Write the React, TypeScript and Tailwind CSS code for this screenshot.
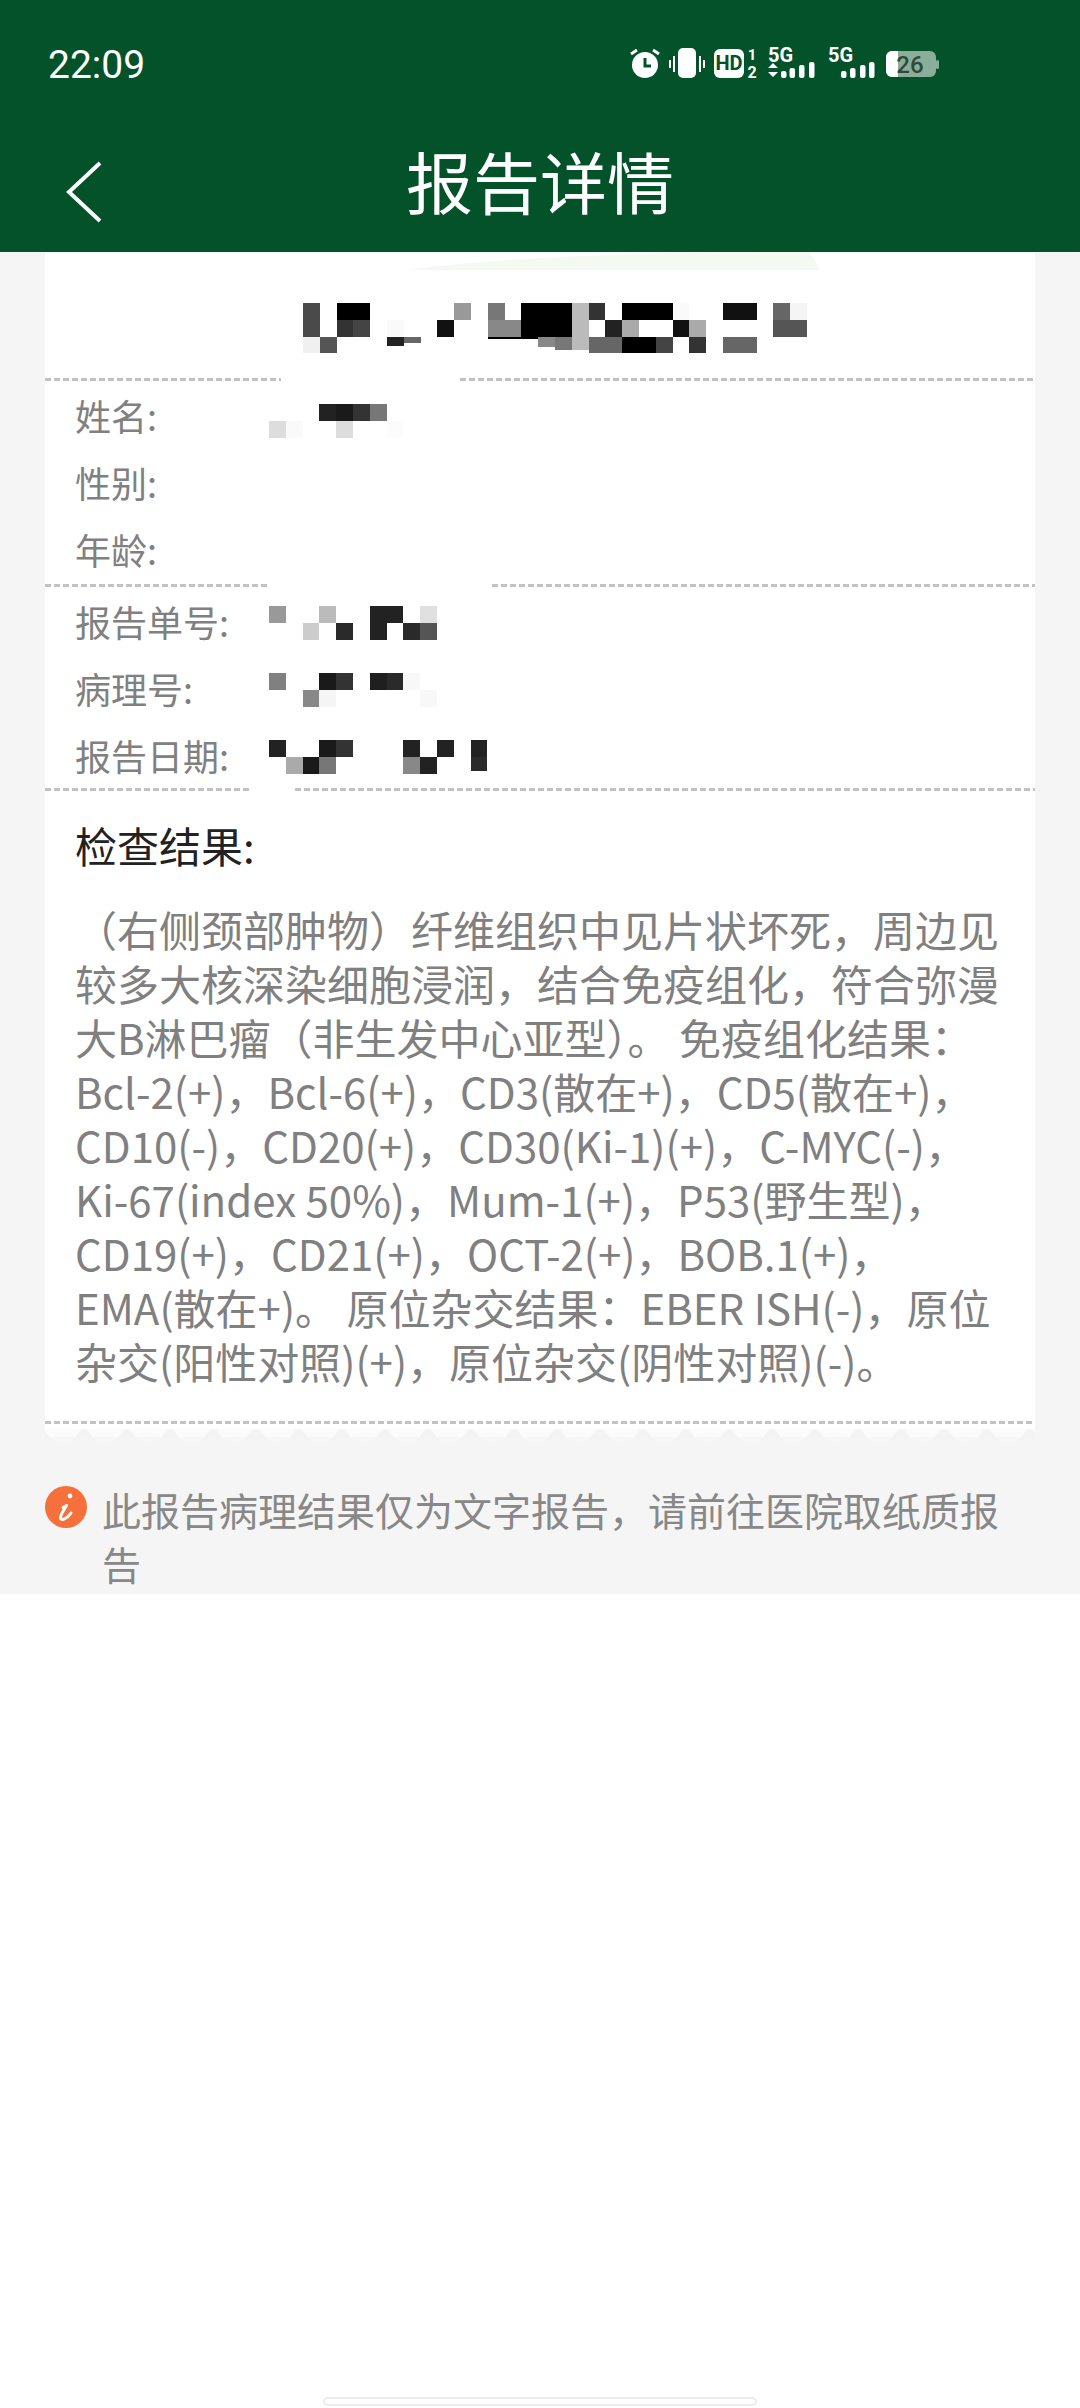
type Cell = [number, number, string, number?];

const titleCells: Cell[] = [
    [0, 0, '#4a4a4a'], [2, 0, '#000'], [3, 0, '#000'], [9, 0, '#999'], [11, 0, '#777'], [13, 0, '#000'], [14, 0, '#000'], [15, 0, '#000'],
    [16, 0, '#bbb'], [17, 0, '#333'], [19, 0, '#000'], [20, 0, '#000'], [21, 0, '#000'], [22, 0, '#fafafa'], [25, 0, '#111'], [26, 0, '#111'], [28, 0, '#666'], [29, 0, '#f5f5f5'],
    [0, 1, '#4a4a4a'], [2, 1, '#333'], [3, 1, '#444'], [5, 1, '#fafafa'], [8, 1, '#111'], [11, 1, '#888'], [12, 1, '#888'], [13, 1, '#000'], [14, 1, '#000'], [15, 1, '#000'],
    [16, 1, '#bbb'], [18, 1, '#222'], [19, 1, '#aaa'], [22, 1, '#111'], [23, 1, '#aaa'], [28, 1, '#555'], [29, 1, '#555'],
    [0, 2, '#f0f0f0'], [1, 2, '#555'], [5, 2, '#222', 0.55], [6, 2, '#666', 0.4], [11, 2, '#000', 0.15], [12, 2, '#000', 0.15], [13, 2, '#000', 0.15], [14, 2, '#888', 0.6],
    [15, 2, '#777', 0.8], [16, 2, '#bbb', 0.8], [17, 2, '#666'], [18, 2, '#666'], [19, 2, '#000'], [20, 2, '#000'], [21, 2, '#444'], [23, 2, '#333'], [25, 2, '#666'], [26, 2, '#666'],
];

const nameCells: Cell[] = [
    [3, 0, '#222'], [4, 0, '#1a1a1a'], [5, 0, '#333'], [6, 0, '#777'],
    [0, 1, '#ddd'], [1, 1, '#fafafa'], [4, 1, '#ddd'], [7, 1, '#fcfcfc'],
];

const reportCells: Cell[] = [
    [0, 0, '#999'], [3, 0, '#bbb'], [6, 0, '#222'], [7, 0, '#222'], [9, 0, '#e0e0e0'],
    [2, 1, '#ccc'], [4, 1, '#2a2a2a'], [6, 1, '#222'], [8, 1, '#2a2a2a'], [9, 1, '#555'],
];

const pathologyCells: Cell[] = [
    [0, 0, '#808080'], [3, 0, '#1a1a1a'], [4, 0, '#333'], [6, 0, '#1f1f1f'], [7, 0, '#2a2a2a'], [8, 0, '#f8f8f8'],
    [2, 1, '#888'], [3, 1, '#f5f5f5'], [9, 1, '#f8f8f8'],
];

const dateCells: Cell[] = [
    [0, 0, '#222'], [3, 0, '#1a1a1a'], [4, 0, '#333'], [8, 0, '#222'], [10, 0, '#222'], [12, 0, '#222'],
    [1, 1, '#aaa'], [2, 1, '#1a1a1a'], [3, 1, '#777'], [8, 1, '#888'], [9, 1, '#222'], [12, 1, '#2a2a2a', 0.85],
];

const resultLines = [
    '（右侧颈部肿物）纤维组织中见片状坏死，周边见',
    '较多大核深染细胞浸润，结合免疫组化，符合弥漫',
    '大B淋巴瘤（非生发中心亚型）。 免疫组化结果：',
    'Bcl-2(+)，Bcl-6(+)，CD3(散在+)，CD5(散在+)，',
    'CD10(-)，CD20(+)，CD30(Ki-1)(+)，C-MYC(-)，',
    'Ki-67(index 50%)，Mum-1(+)，P53(野生型)，',
    'CD19(+)，CD21(+)，OCT-2(+)，BOB.1(+)，',
    'EMA(散在+)。 原位杂交结果：EBER ISH(-)，原位',
    '杂交(阳性对照)(+)，原位杂交(阴性对照)(-)。',
];

function Mosaic({ cells, cols, rows, className }: { cells: Cell[]; cols: number; rows: number; className?: string }) {
    const size = 16.8;
    return (
        <svg className={className} width={cols * size} height={rows * size} viewBox={`0 0 ${cols * size} ${rows * size}`} shapeRendering="crispEdges">
            {cells.map(([col, row, color, part]) => (
                <rect key={`${col}-${row}`} x={col * size} y={row * size} width={size} height={size * (part ?? 1)} fill={color} />
            ))}
        </svg>
    );
}

const dashes = 'bg-[repeating-linear-gradient(90deg,#c2c2c2_0,#c2c2c2_6px,transparent_6px,transparent_9px)]';

// dashed divider; the screenshot has a bit of it wiped out next to the redactions
function Divider({ gapStart, gapWidth }: { gapStart?: number; gapWidth?: number }) {
    if (gapStart === undefined) {
        return <div className={`h-[3px] ${dashes}`} />;
    }
    return (
        <div className="flex h-[3px]">
            <div className={dashes} style={{ width: gapStart }} />
            <div style={{ width: gapWidth }} />
            <div className={`flex-1 ${dashes}`} />
        </div>
    );
}

function InfoRow({ label, children }: { label: string; children?: React.ReactNode }) {
    return (
        <div className="flex h-[60px] items-start pl-[30px]">
            <div className="flex h-[54px] w-[194px] items-center text-[36px] text-[#808080]">{label}</div>
            {children}
        </div>
    );
}

function StatusIcons() {
    const bars = (x: number[]) =>
        x.map((bx, i) => <rect key={bx} x={bx} y={71 - i * 3} width={5.5} height={7 + i * 3} rx={2} fill="#fff" />);
    return (
        <svg width={320} height={50} viewBox="625 40 320 50" className="mr-[135px] ml-auto">
            <circle cx={645} cy={65} r={13} fill="#fff" />
            <path d="M645 58v8h6" fill="none" stroke="#03522a" strokeWidth={3} />
            <path d="M631 54l6-4M653 50l6 4" stroke="#fff" strokeWidth={3} />
            <rect x={678} y={48} width={18} height={30} rx={5} fill="#fff" />
            <path d="M670 60v8M674 56v16M700 56v16M704 60v8" stroke="#fff" strokeWidth={2} />
            <rect x={714} y={49} width={30} height={29} rx={6} fill="#fff" />
            <text x={729} y={70} textAnchor="middle" fontSize={20} fontWeight={700} fill="#03522a" fontFamily="Roboto">HD</text>
            <text x={752} y={60} textAnchor="middle" fontSize={15} fontWeight={700} fill="#fff" fontFamily="Roboto">1</text>
            <text x={752} y={78} textAnchor="middle" fontSize={16} fontWeight={700} fill="#fff" fontFamily="Roboto">2</text>
            <text x={768} y={62} fontSize={20} fontWeight={700} fill="#fff" fontFamily="Roboto">5G</text>
            <path d="M773 63l5 5h-10zM768 72h10l-5 5z" fill="#fff" />
            {bars([781, 789.5, 799, 809])}
            <text x={828} y={62} fontSize={20} fontWeight={700} fill="#fff" fontFamily="Roboto">5G</text>
            {bars([841, 850, 860, 869])}
            <rect x={886} y={51} width={50} height={26} rx={6} fill="#8aae9a" />
            <path d="M892 51h6v26h-6a6 6 0 0 1-6-6V57a6 6 0 0 1 6-6z" fill="#fff" />
            <rect x={936} y={60} width={3} height={9} rx={1.500} fill="#8aae9a" />
            <text x={910} y={73} textAnchor="middle" fontSize={24} fontWeight={500} fill="#2f4a3b" fontFamily="Roboto">26</text>
        </svg>
    );
}

export default function App() {
    return (
        <div className="flex min-h-[2408px] w-[1080px] flex-col bg-white font-['Noto_Sans_CJK_SC',sans-serif]">
            <header className="h-[252px] bg-[#03522a] pt-[40px] text-white">
                <div className="flex h-[50px] items-center pl-[48px]">
                    <span className="font-['Roboto',sans-serif] text-[39px] leading-none font-normal">22:09</span>
                    <StatusIcons />
                </div>
                <div className="mt-[42px] grid h-[100px] grid-cols-[1fr_auto_1fr] items-center">
                    <svg className="mt-[20px] ml-[66px]" width={36} height={62} viewBox="0 0 36 62" fill="none">
                        <path d="M34 2L3 31l31 29" stroke="#fff" strokeWidth={4} />
                    </svg>
                    <h1 className="mb-[6px] text-[67px] leading-none font-normal">报告详情</h1>
                </div>
            </header>

            <main className="bg-[#f5f5f5]">
                <div className="relative mx-[45px] bg-white">
                    <svg className="absolute top-0 left-[361px]" width={414} height={18} viewBox="0 0 414 18">
                        <path d="M0 18C100 4 260 0 380 0h24l10 18z" fill="#f4faf2" />
                    </svg>
                    <div className="h-[126px] pt-[51px] pl-[258px]">
                        <Mosaic cells={titleCells} cols={30} rows={3} />
                    </div>
                    <Divider gapStart={236} gapWidth={179} />
                    <div className="flex flex-col gap-[7px] pt-[7px] pb-[2px]">
                        <InfoRow label="姓名:">
                            <Mosaic cells={nameCells} cols={8} rows={2} className="mt-[16px]" />
                        </InfoRow>
                        <InfoRow label="性别:" />
                        <InfoRow label="年龄:" />
                    </div>
                    <Divider gapStart={223} gapWidth={224} />
                    <div className="flex flex-col gap-[7px] pt-[7px]">
                        <InfoRow label="报告单号:">
                            <Mosaic cells={reportCells} cols={10} rows={2} className="mt-[12px]" />
                        </InfoRow>
                        <InfoRow label="病理号:">
                            <Mosaic cells={pathologyCells} cols={10} rows={2} className="mt-[12px]" />
                        </InfoRow>
                        <InfoRow label="报告日期:">
                            <Mosaic cells={dateCells} cols={13} rows={2} className="mt-[12px]" />
                        </InfoRow>
                    </div>
                    <Divider gapStart={205} gapWidth={45} />
                    <div className="px-[30px] pt-[31px] pb-[33px]">
                        <h2 className="h-[45px] text-[42px] leading-[45px] font-normal text-[#222]">检查结果:</h2>
                        <div className="mt-[35px] text-[42px] leading-[54px] text-[#808080]">
                            {resultLines.map((line) => (
                                <p key={line} className="whitespace-pre">
                                    {line}
                                </p>
                            ))}
                        </div>
                    </div>
                    <Divider />
                    <svg className="block" width={990} height={17} viewBox="0 0 990 17">
                        <defs>
                            <pattern id="scallop" width={43} height={17} patternUnits="userSpaceOnUse" patternTransform="translate(17.5 0)">
                                <path d="M6 17C13 17 16 5 21.500 5S30 17 37 17z" fill="#f3f3f3" />
                            </pattern>
                        </defs>
                        <rect y={5} width={990} height={12} fill="#fbfbfb" />
                        <rect width={990} height={17} fill="url(#scallop)" />
                        <rect y={13} width={990} height={4} fill="#f5f5f5" opacity={0.6} />
                    </svg>
                </div>
                <div className="flex pt-[45px] pl-[45px]">
                    <svg className="shrink-0" width={42} height={42} viewBox="0 0 42 42">
                        <circle cx={21} cy={21} r={21} fill="#f5703a" />
                        <circle cx={25} cy={10} r={2.4} fill="#fff" />
                        <path d="M18 21.500l3.500-2C19 24 15 29 15.500 32c.5 3 6.500 1 10.500-5" fill="none" stroke="#fff" strokeWidth={3} strokeLinecap="round" strokeLinejoin="round" />
                    </svg>
                    <p className="-mt-[4px] ml-[15px] w-[900px] pb-[4px] text-[39px] leading-[54px] text-[#888]">此报告病理结果仅为文字报告，请前往医院取纸质报告</p>
                </div>
            </main>

            <div className="flex flex-1 items-end justify-center pb-[2px]">
                <div className="h-[9px] w-[434px] rounded-full border-2 border-[#ececec] bg-white" />
            </div>
        </div>
    );
}
